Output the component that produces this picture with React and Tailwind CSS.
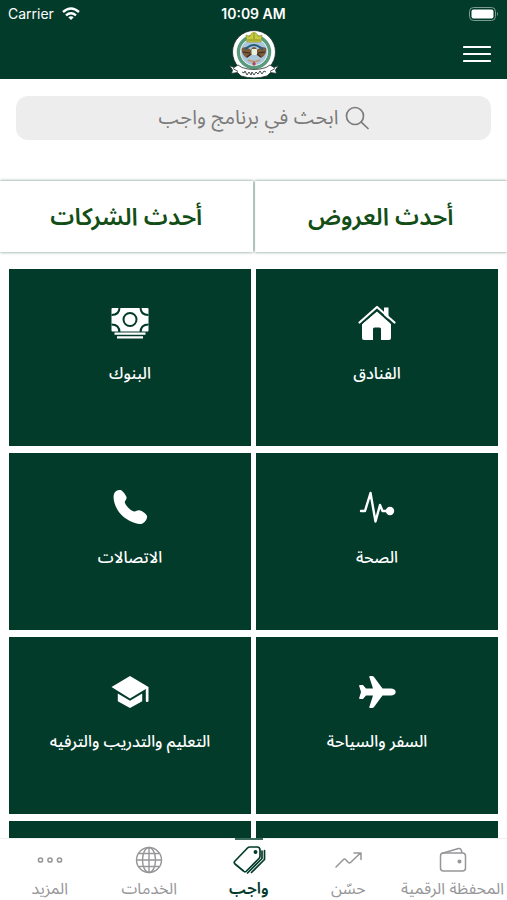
import React, { useState } from 'react';

const Emblem = () => (
    <svg viewBox="0 0 50 48" className="w-[50px] h-12" role="img" aria-label="الشعار">
        <circle cx="25" cy="22" r="21.5" fill="#fff" stroke="#1d2b26" strokeWidth="0.8" />
        <circle cx="25" cy="22" r="15.5" fill="none" stroke="#5a9a7c" strokeWidth="3.5" />
        <circle cx="25" cy="22" r="13.5" fill="#a9c6dc" stroke="#e6eef0" strokeWidth="0.8" />
        {/* crown */}
        <path d="M18 12 L17 5 L20.5 6.5 L22.5 3.5 L25 2 L27.5 3.5 L29.5 6.5 L33 5 L32 12 Z" fill="#c8cb3e" stroke="#8c962c" strokeWidth="0.7" />
        <path d="M18.5 10 H31.5 M25 3 V9" stroke="#7f8c22" strokeWidth="0.9" />
        {/* eagle */}
        <path d="M13 18 C16 16 20 18 22 20 C23 16 27 16 28 20 C30 18 34 16 37 18 C38 22 36 26 32 28 L28 25 L22 25 L18 28 C14 26 12 22 13 18 Z" fill="#7d5a3c" />
        <path d="M16 19 C20 17 20 15 25 15 C29 15 30 17 34 19" fill="none" stroke="#2b5b78" strokeWidth="2" />
        <path d="M14 22 L21 23 M29 23 L36 22 M18 27 L22 24 M32 27 L28 24" stroke="#3b2a20" strokeWidth="1.2" />
        <rect x="22.5" y="19" width="5.5" height="6" rx="1" fill="#e6f2de" />
        <path d="M19 30 Q25 33 31 30" fill="none" stroke="#c09a6a" strokeWidth="1.6" />
        <path d="M23 34 L25 31 L27 34 L25 36 Z" fill="#b3475a" />
        {/* ribbon */}
        <path d="M0.5 35.5 L5 37.500 L9 35 L13 37.500 Q25 41.500 37 37.500 L41 35 L45 37.500 L49.5 35.500 L46.500 40 L47.500 43.500 L41.500 42.500 L38 46 Q25 50 12 46 L8.500 42.500 L2.500 43.500 L3.500 40 Z" fill="#fff" stroke="#25302c" strokeWidth="0.8" />
        <path d="M13 42 l2 1 l1 -2 l2 4 l2 -3 l2 3 l1 -3 l2 3 l2 -3 l2 2 l2 -3 l2 3 l2 -3 l2 1" fill="none" stroke="#333b38" strokeWidth="0.9" />
        <path d="M4 38.500 L9 41.500 M46 38.500 L41 41.500" stroke="#333b38" strokeWidth="0.9" />
    </svg>
);

const HouseIcon = () => (
    <svg viewBox="0 0 38 36" className="w-[38px] h-9" fill="#fff" aria-hidden="true">
        <path d="M19 6.5 L33 19 V33 Q33 35 31 35 H23 V24 Q23 22.500 21.500 22.500 H16.500 Q15 22.500 15 24 V35 H6 Q4 35 4 33 V19 Z" />
        <path d="M26 2.500 H30.500 V14 L26 10 Z" />
        <path d="M3.500 19.200 L19 5.300 L34.500 19.200" fill="none" stroke="#033b2a" strokeWidth="1" />
        <path d="M1.500 17.500 L19 2 L36.500 17.500" fill="none" stroke="#fff" strokeWidth="2.200" strokeLinecap="round" strokeLinejoin="round" />
    </svg>
);

const MoneyIcon = () => (
    <svg viewBox="0 0 38 36" className="w-[38px] h-9" aria-hidden="true">
        <rect x="0.500" y="3" width="37" height="23.500" rx="1" fill="#fff" />
        <g fill="none" stroke="#033b2a" strokeWidth="2">
            <circle cx="19" cy="14.500" r="6.500" />
            <path d="M8.500 2.500 Q8.500 10 0.500 10 M29.500 2.500 Q29.500 10 37.500 10 M8.500 27.500 Q8.500 19.500 0.500 19.500 M29.500 27.500 Q29.500 19.500 37.500 19.500" />
        </g>
        <path d="M3.500 28.700 H34.500 M6 32.300 H32" stroke="#fff" strokeWidth="2.300" />
    </svg>
);

const PulseIcon = () => (
    <svg viewBox="0 0 38 36" className="w-[38px] h-9" fill="none" stroke="#fff" strokeWidth="2.400" strokeLinecap="round" strokeLinejoin="round" aria-hidden="true">
        <path d="M3 22 H7 L12.500 4 L17.500 32.500 L22 16 L24.500 22 H31" />
        <circle cx="32" cy="22" r="3" fill="#fff" />
    </svg>
);

const PhoneIcon = () => (
    <svg viewBox="0 0 38 36" className="w-[38px] h-9" fill="#fff" aria-hidden="true">
        <path d="M3 5 C4 2 7 0.500 9.500 1 C11.500 1.500 14.500 5.500 15.500 8 C16.200 10.500 13.500 11.800 13.800 13.500 C14.500 16.500 19.500 21.800 23 22.500 C25 22.800 26.500 20.800 29 21.500 C31.500 22.200 35.500 25 36 27 C36.500 30 34 33.500 31 34.700 C25.500 36 14 31 8.500 23.800 C4 17.800 1.500 10 3 5 Z" />
    </svg>
);

const PlaneIcon = () => (
    <svg viewBox="0 0 38 36" className="w-[38px] h-9" fill="#fff" aria-hidden="true">
        <path d="M24 15.500 H33 C35.500 15.500 37.700 17 37.700 19 C37.700 21 35.500 22.500 33 22.500 H24.500 L16 34 Q15.300 35 14 35 H12 Q11 35 11.300 34 L15 22.500 H8 L5 26 H2 Q0.800 26 1.200 25 L3 19 L1.200 13 Q0.800 12 2 12 H5 L8 15.500 H15 L11.300 4 Q11 3 12 3 H14 Q15.300 3 16 4 L24.500 15.500 Z" />
    </svg>
);

const GraduationIcon = () => (
    <svg viewBox="0 0 38 36" className="w-[38px] h-9" fill="#fff" aria-hidden="true">
        <path d="M0.500 14 L19 3 L37.500 14 V28 Q37.500 29 36 29 Q34.800 29 34.800 28 V16 L19 25.500 Z" />
        <path d="M6.800 20.500 L19 27.700 L31.200 20.500 V28.300 L19 35 L6.800 28.300 Z" />
    </svg>
);

const WalletIcon = () => (
    <svg viewBox="0 0 28 28" className="size-7" fill="none" stroke="currentColor" strokeWidth="1.500" strokeLinejoin="round" aria-hidden="true">
        <rect x="1.500" y="7" width="25" height="18" rx="3" />
        <path d="M2.500 7.500 L19.500 2.500 Q21.500 2 22.200 4 L23 7" />
        <circle cx="20.500" cy="15.500" r="1.300" fill="currentColor" />
    </svg>
);

const TrendIcon = () => (
    <svg viewBox="0 0 28 28" className="size-7" fill="none" stroke="currentColor" strokeWidth="1.500" strokeLinecap="round" strokeLinejoin="round" aria-hidden="true">
        <path d="M2 21 L9.500 13.500 Q10.500 12.500 11.500 13.500 L14.500 16.500 Q15.500 17.500 16.500 16.500 L26.500 7 M20 7 H27 V13.500" />
    </svg>
);

const TagsIcon = () => (
    <svg viewBox="0 0 34 28" className="w-[34px] h-7" fill="none" stroke="currentColor" strokeWidth="1.700" strokeLinecap="round" strokeLinejoin="round" aria-hidden="true">
        <path d="M18 1 H25 Q28 1 28 4 V10 Q28 11.500 27 12.500 L14.500 25 Q13 26.500 11.500 25 L3 18 Q1.500 16.500 3 15 L15.500 2 Q16.500 1 18 1 Z" />
        <path d="M30 5 V12.500 L15.500 27 M32.500 4.500 V13.500 L19.500 26.500" />
        <circle cx="23.500" cy="6" r="1.100" fill="currentColor" />
    </svg>
);

const GlobeIcon = () => (
    <svg viewBox="0 0 28 28" className="size-7" fill="none" stroke="currentColor" strokeWidth="1.400" aria-hidden="true">
        <circle cx="14" cy="14" r="12.500" />
        <ellipse cx="14" cy="14" rx="6.500" ry="12.500" />
        <path d="M14 1.500 V26.500 M1.500 14 H26.500 M3.500 7.500 H24.500 M3.500 20.500 H24.500" />
    </svg>
);

const DotsIcon = () => (
    <svg viewBox="0 0 28 28" className="size-7" fill="none" stroke="currentColor" strokeWidth="1.500" aria-hidden="true">
        <circle cx="4.500" cy="14" r="2.100" />
        <circle cx="14" cy="14" r="2.100" />
        <circle cx="23.500" cy="14" r="2.100" />
    </svg>
);

const categories = [
    { name: 'الفنادق', Icon: HouseIcon },
    { name: 'البنوك', Icon: MoneyIcon },
    { name: 'الصحة', Icon: PulseIcon },
    { name: 'الاتصالات', Icon: PhoneIcon },
    { name: 'السفر والسياحة', Icon: PlaneIcon },
    { name: 'التعليم والتدريب والترفيه', Icon: GraduationIcon },
];

const navItems = [
    { name: 'المحفظة الرقمية', Icon: WalletIcon },
    { name: 'حسّن', Icon: TrendIcon },
    { name: 'واجب', Icon: TagsIcon },
    { name: 'الخدمات', Icon: GlobeIcon },
    { name: 'المزيد', Icon: DotsIcon },
];

const StatusBar = () => (
    <div dir="ltr" className="grid grid-cols-3 items-center h-7 px-2 text-sm text-white">
        <div className="flex items-center gap-2">
            <span>Carrier</span>
            <svg viewBox="0 0 18 14" className="w-[18px] h-3.5" fill="none" stroke="#fff" strokeWidth="2.400" aria-hidden="true">
                <path d="M1 5 Q9 -2 17 5 M4 8.300 Q9 4 14 8.300" />
                <path d="M6.300 10.300 Q9 8 11.700 10.300 L9 13 Z" fill="#fff" stroke="none" />
            </svg>
        </div>
        <span className="text-center font-semibold">10:09 AM</span>
        <svg viewBox="0 0 30 14" className="w-[30px] h-3.5 justify-self-end" aria-hidden="true">
            <rect x="0.500" y="0.500" width="26" height="13" rx="4" fill="none" stroke="#7c9c92" />
            <rect x="2.500" y="2.500" width="22" height="9" rx="2" fill="#fff" />
            <path d="M28 5 Q30 7 28 9 Z" fill="#7c9c92" />
        </svg>
    </div>
);

const App = () => {
    const [active, setActive] = useState('واجب');
    const [query, setQuery] = useState('');

    return (
        <div dir="rtl" className="flex flex-col h-screen bg-white font-['Inter','Noto_Sans_Arabic','Noto_Sans','DejaVu_Sans',sans-serif]">
            <header className="bg-[#033b2a] shrink-0">
                <StatusBar />
                <div className="grid grid-cols-3 items-center px-4 pt-0.5 pb-px">
                    <button aria-label="القائمة" className="justify-self-start">
                        <svg viewBox="0 0 28 18" className="w-7 h-[18px]" stroke="#fff" strokeWidth="2.200" strokeLinecap="round" aria-hidden="true">
                            <path d="M1 2 H27 M1 9 H27 M1 16 H27" />
                        </svg>
                    </button>
                    <div className="justify-self-center"><Emblem /></div>
                </div>
            </header>

            <main className="flex-1 min-h-0 overflow-hidden">
                <label className="flex items-center justify-center gap-1.5 h-11 mx-4 mt-[17px] pl-5 rounded-xl bg-[#ededed] text-[#7b7b7b]">
                    <svg viewBox="0 0 24 24" className="size-6" fill="none" stroke="currentColor" strokeWidth="1.700" strokeLinecap="round" aria-hidden="true">
                        <circle cx="10" cy="10" r="8.500" />
                        <path d="M16.200 16.200 L23 22.500" />
                    </svg>
                    <input
                        type="text"
                        value={query}
                        onChange={(e) => setQuery(e.target.value)}
                        placeholder="ابحث في برنامج واجب"
                        aria-label="ابحث في برنامج واجب"
                        className="field-sizing-content bg-transparent text-xl outline-none placeholder:text-[#7b7b7b]"
                    />
                </label>

                <div className="grid grid-cols-2 gap-0.5 mt-[41px] text-2xl font-semibold text-[#124e16]">
                    <button className="h-[71px] bg-white shadow-[0_0_3px_#033b2a99]">أحدث العروض</button>
                    <button className="h-[71px] bg-white shadow-[0_0_3px_#033b2a99]">أحدث الشركات</button>
                </div>

                <div className="grid grid-cols-2 gap-x-[5px] gap-y-[7px] px-[9px] mt-[17px]">
                    {categories.map(({ name, Icon }) => (
                        <button key={name} className="flex flex-col items-center gap-5 h-[177px] pt-9 bg-[#033b2a] text-white text-base font-medium">
                            <Icon />
                            <span>{name}</span>
                        </button>
                    ))}
                    <div className="h-[177px] bg-[#033b2a]" />
                    <div className="h-[177px] bg-[#033b2a]" />
                </div>
            </main>

            <nav className="grid grid-cols-[auto_repeat(4,1fr)] shrink-0 h-[62px] bg-white border-t border-[#f0f0f0]">
                {navItems.map(({ name, Icon }) => (
                    <button
                        key={name}
                        onClick={() => setActive(name)}
                        className={`relative flex flex-col items-center gap-0.5 px-[3px] pt-[7px] text-base whitespace-nowrap ${active === name ? 'text-[#033b2a] font-semibold' : 'text-[#969699]'}`}
                    >
                        {active === name && <span className="absolute -top-px w-7 h-0.5 bg-[#3c6a5c]" />}
                        <Icon />
                        <span>{name}</span>
                    </button>
                ))}
            </nav>
        </div>
    );
};

export default App;
